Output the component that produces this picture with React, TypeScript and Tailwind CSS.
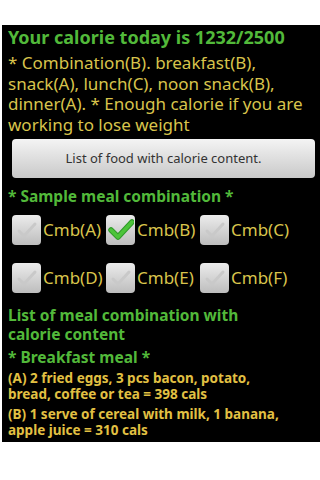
import React from "react";

const Check = ({ on }: { on: boolean }) => (
  <div className="w-[29px] h-[30px] rounded-[4px] bg-gradient-to-b from-[#ececec] to-[#bdbdbd] flex items-center justify-center shrink-0">
    <svg width="26" height="22" viewBox="0 0 26 22">
      {on ? (
        <path d="M3 11 L10 18 L24 3" fill="none" stroke="#2f9a2a" strokeWidth="5.5" strokeLinecap="round" strokeLinejoin="round" />
      ) : (
        <path d="M5 12 L10 17 L21 5" fill="none" stroke="#c9c9c9" strokeWidth="3" strokeLinecap="round" strokeLinejoin="round" />
      )}
      {on && (
        <path d="M3 11 L10 18 L24 3" fill="none" stroke="#4cc43a" strokeWidth="3.5" strokeLinecap="round" strokeLinejoin="round" />
      )}
    </svg>
  </div>
);

const Item = ({ label, on }: { label: string; on?: boolean }) => (
  <div className="w-[94px] flex items-center gap-[2px] shrink-0">
    <Check on={!!on} />
    <span className="text-[17px] leading-[20px] text-[#d8c44c]">{label}</span>
  </div>
);

export default function App() {
  return (
    <div className="w-[320px] h-[480px] bg-white" style={{ fontFamily: '"Noto Sans", "Open Sans", sans-serif' }}>
      <div className="h-[25px]" />
      <div className="ml-[2px] h-[417px] bg-black pl-[6px] pt-[2px]">
        <div className="text-[18px] leading-[20px] font-bold text-[#52b93a] whitespace-nowrap">Your calorie today is 1232/2500</div>
        <div className="mt-[6px] text-[17px] leading-[20.5px] text-[#d8c44c] pr-[4px]">
          * Combination(B). breakfast(B), snack(A), lunch(C), noon snack(B), dinner(A). * Enough calorie if you are working to lose weight
        </div>
        <div className="mt-[4px] ml-[4px] w-[303px] h-[39px] rounded-[4px] bg-gradient-to-b from-[#f4f4f4] to-[#c9c9c9] flex items-center justify-center text-[13px] text-[#333]">
          List of food with calorie content.
        </div>
        <div className="mt-[7.5px] text-[15.5px] leading-[20px] font-bold text-[#52b93a]">* Sample meal combination *</div>
        <div className="mt-[9.5px] ml-[4px] flex flex-col gap-[18px]">
          <div className="flex">
            <Item label="Cmb(A)" />
            <Item label="Cmb(B)" on />
            <Item label="Cmb(C)" />
          </div>
          <div className="flex">
            <Item label="Cmb(D)" />
            <Item label="Cmb(E)" />
            <Item label="Cmb(F)" />
          </div>
        </div>
        <div className="mt-[13px] text-[15.5px] leading-[19px] font-bold text-[#52b93a] w-[240px]">
          List of meal combination with calorie content
        </div>
        <div className="mt-[3px] text-[15.5px] leading-[20px] font-bold text-[#52b93a]">* Breakfast meal *</div>
        <div className="mt-[4px] text-[13.5px] leading-[15.5px] font-bold text-[#e2c043] w-[250px]">
          (A) 2 fried eggs, 3 pcs bacon, potato, bread, coffee or tea = 398 cals
        </div>
        <div className="mt-[5px] text-[13.5px] leading-[15.5px] font-bold text-[#e2c043] w-[300px]">
          (B) 1 serve of cereal with milk, 1 banana, apple juice = 310 cals
        </div>
      </div>
    </div>
  );
}
